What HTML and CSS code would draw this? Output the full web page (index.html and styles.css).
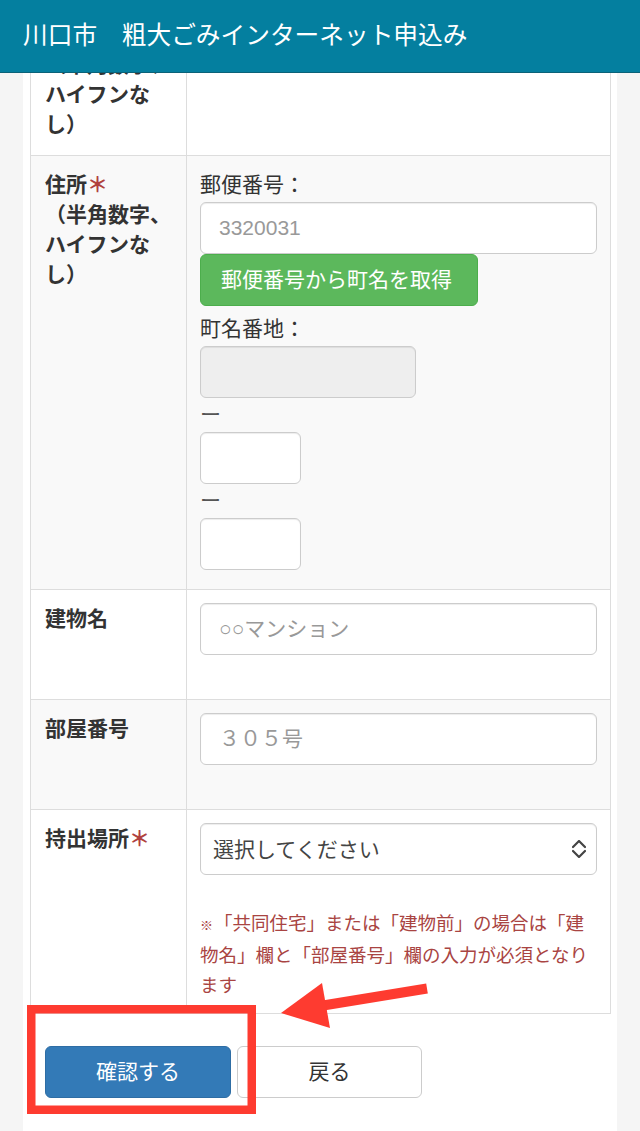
FILE: index.html
```html
<!DOCTYPE html>
<html lang="ja">
<head>
<meta charset="utf-8">
<title>川口市　粗大ごみインターネット申込み</title>
<link rel="stylesheet" href="styles.css">
</head>
<body>
<header class="topbar">
  <h1 class="brand">川口市　粗大ごみインターネット申込み</h1>
</header>

<main class="page">
  <table class="form-table">
    <colgroup><col class="col-label"><col class="col-value"></colgroup>
    <tbody>
      <tr class="row-plain">
        <th class="label label-cut">（半角数字、<br>ハイフンな<br>し）</th>
        <td class="value"></td>
      </tr>
      <tr class="row-striped">
        <th class="label">住所<span class="req">＊</span><br>（半角数字、<br>ハイフンな<br>し）</th>
        <td class="value">
          <div class="sub-label first">郵便番号：</div>
          <input class="field" type="text" placeholder="3320031">
          <button class="btn btn-success" type="button">郵便番号から町名を取得</button>
          <div class="sub-label">町名番地：</div>
          <input class="field field-town" type="text" disabled>
          <div class="dash">ー</div>
          <input class="field field-short" type="text">
          <div class="dash">ー</div>
          <input class="field field-short last" type="text">
        </td>
      </tr>
      <tr class="row-plain">
        <th class="label">建物名</th>
        <td class="value"><input class="field field-gap" type="text" placeholder="○○マンション"></td>
      </tr>
      <tr class="row-striped">
        <th class="label">部屋番号</th>
        <td class="value"><input class="field field-gap" type="text" placeholder="３０５号"></td>
      </tr>
      <tr class="row-plain">
        <th class="label">持出場所<span class="req">＊</span></th>
        <td class="value value-last">
          <div class="select-wrap">
            <select class="select">
              <option>選択してください</option>
            </select>
            <svg class="select-icon" width="14" height="18" viewBox="0 0 14 18">
              <polyline points="1,7 7,1 13,7" fill="none" stroke="#444" stroke-width="2.2" stroke-linecap="round" stroke-linejoin="round"/>
              <polyline points="1,11 7,17 13,11" fill="none" stroke="#444" stroke-width="2.2" stroke-linecap="round" stroke-linejoin="round"/>
            </svg>
          </div>
          <p class="note"><span class="kome">※</span>「共同住宅」または「建物前」の場合は「建<br>物名」欄と「部屋番号」欄の入力が必須となり<br>ます</p>
        </td>
      </tr>
    </tbody>
  </table>

  <div class="actions">
    <button class="btn btn-primary" type="button">確認する</button>
    <button class="btn btn-default" type="button">戻る</button>
  </div>
</main>

<svg class="annotation" width="640" height="1131" viewBox="0 0 640 1131">
  <rect x="31.25" y="1009.25" width="220.5" height="100.5" fill="none" stroke="#fe3b30" stroke-width="8.5"/>
  <line x1="320" y1="1006" x2="427" y2="988.5" stroke="#fe3b30" stroke-width="10"/>
  <polygon points="281,1013 322,983 330,1028" fill="#fe3b30"/>
</svg>
</body>
</html>
```

FILE: styles.css
```css
* { box-sizing: border-box; }

html, body {
  margin: 0;
  padding: 0;
}

body {
  background: #f5f5f5;
  font-family: "Liberation Sans", "Noto Sans CJK JP", sans-serif;
  color: #333;
  position: relative;
  min-height: 1131px;
}

.topbar {
  position: fixed;
  top: 0;
  left: 0;
  right: 0;
  height: 73px;
  background: #047f9f;
  border-bottom: 1px solid #0b6278;
  z-index: 10;
}

.brand {
  margin: 0;
  padding-left: 23px;
  font-size: 24.7px;
  font-weight: normal;
  line-height: 72px;
  color: #fff;
  letter-spacing: 0;
}

.page {
  margin: 0 23px;
  padding: 7px 6px 0 7px;
  background: #fff;
  min-height: 1131px;
}

.form-table {
  width: 581px;
  border-collapse: collapse;
  table-layout: fixed;
  border: 1px solid #ddd;
}

.col-label { width: 156px; }

.row-plain { background: #fff; }
.row-striped { background: #f9f9f9; }

.form-table th,
.form-table td {
  border: 1px solid #ddd;
  vertical-align: top;
}

.label {
  padding: 14px 10px 14px 14px;
  text-align: left;
  font-size: 21px;
  font-weight: bold;
  line-height: 30px;
  white-space: nowrap;
  color: #333;
}

.label-cut {
  padding-top: 42px;
  padding-bottom: 15px;
}

.req {
  color: #b0413e;
}

.value {
  padding: 13px 13px 14px 13px;
  font-size: 21px;
  line-height: 30px;
}

.value-last {
  padding-bottom: 12px;
}

.sub-label {
  margin-top: 8px;
  margin-bottom: 2px;
  line-height: 30px;
  color: #333;
}

.sub-label.first {
  margin-top: 1px;
}

.dash {
  margin: 2px 0;
  line-height: 30px;
  color: #555;
}

.field {
  display: block;
  width: 100%;
  height: 52px;
  padding: 0 18px;
  border: 1px solid #ccc;
  border-radius: 6px;
  background: #fff;
  box-shadow: inset 0 1px 1px rgba(0, 0, 0, 0.075);
  font-family: "Liberation Sans", "Noto Sans CJK JP", sans-serif;
  font-size: 21px;
  color: #555;
  margin: 0;
}

.field::placeholder {
  color: #999;
}

.field:disabled {
  background: #eee;
}

.field-town { width: 216px; }
.field-short { width: 101px; }
.field-short.last { margin-bottom: 5px; }
.field-gap { margin-bottom: 30px; }

.btn {
  display: inline-block;
  height: 52px;
  padding: 0 20px;
  border: 1px solid transparent;
  border-radius: 6px;
  font-family: "Liberation Sans", "Noto Sans CJK JP", sans-serif;
  font-size: 21px;
  line-height: 50px;
  text-align: center;
  cursor: pointer;
  margin: 0;
}

.btn-success {
  display: block;
  width: 278px;
  background: #5cb85c;
  border-color: #4cae4c;
  color: #fff;
  text-align: left;
}

.select-wrap {
  position: relative;
}

.select {
  display: block;
  width: 100%;
  height: 52px;
  padding: 0 40px 0 12px;
  border: 1px solid #ccc;
  border-radius: 6px;
  background: #fff;
  box-shadow: inset 0 1px 1px rgba(0, 0, 0, 0.075);
  font-family: "Liberation Sans", "Noto Sans CJK JP", sans-serif;
  font-size: 21px;
  color: #444;
  appearance: none;
  -webkit-appearance: none;
}

.select-icon {
  position: absolute;
  right: 11px;
  top: 17px;
  pointer-events: none;
}

.note {
  margin: 34px 0 0 0;
  font-size: 18.5px;
  line-height: 30px;
  color: #a94442;
  white-space: nowrap;
}

.kome {
  display: inline-block;
  width: 14px;
  font-size: 13px;
  vertical-align: baseline;
}

.actions {
  display: flex;
  gap: 6px;
  margin-top: 32px;
  padding-left: 15px;
}

.btn-primary {
  width: 186px;
  background: #337ab7;
  border-color: #2e6da4;
  color: #fff;
}

.btn-default {
  width: 185px;
  background: #fff;
  border-color: #ccc;
  color: #333;
}

.annotation {
  position: absolute;
  top: 0;
  left: 0;
  pointer-events: none;
  z-index: 5;
}
```
